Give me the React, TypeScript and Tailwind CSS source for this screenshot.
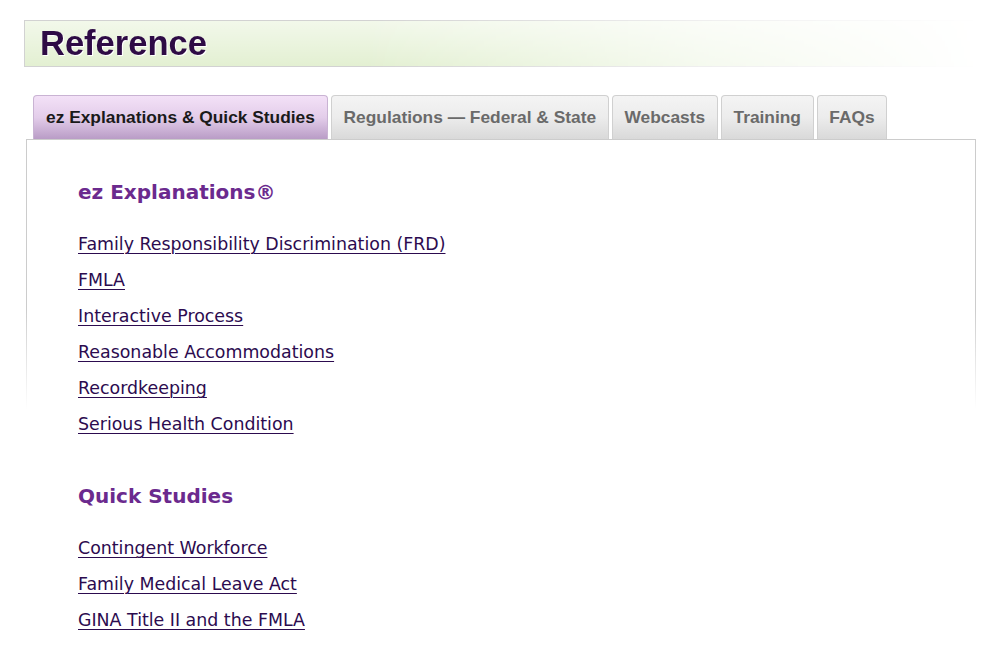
const tabs = [
  { label: 'ez Explanations & Quick Studies', active: true },
  { label: 'Regulations — Federal & State', active: false },
  { label: 'Webcasts', active: false },
  { label: 'Training', active: false },
  { label: 'FAQs', active: false },
];

const explanations = [
  'Family Responsibility Discrimination (FRD)',
  'FMLA',
  'Interactive Process',
  'Reasonable Accommodations',
  'Recordkeeping',
  'Serious Health Condition',
];

const studies = ['Contingent Workforce', 'Family Medical Leave Act', 'GINA Title II and the FMLA'];

const LinkList = ({ items }: { items: string[] }) => (
  <ul>
    {items.map((item) => (
      <li key={item} className="h-[36px] flex items-center">
        <a href="#" className="text-[#2c0b4f] underline underline-offset-[3px] decoration-1">
          {item}
        </a>
      </li>
    ))}
  </ul>
);

export default function App() {
  return (
    <div className="min-h-[657px] bg-white pt-[20px] font-['Liberation_Sans',Arial,sans-serif]">
      <div className="ml-[24px] h-[47px] flex items-center border-l border-y border-[#d2d2d2] pl-[15px] bg-[#e3f0d2] bg-[linear-gradient(to_bottom,rgba(255,255,255,0.55),rgba(255,255,255,0))] [mask-image:linear-gradient(to_right,black_35%,rgba(0,0,0,0.35)_70%,transparent_98%)]">
        <h1 className="text-[34.5px] font-bold text-[#2e0b45] leading-none [text-shadow:1px_1px_0_#fff]">Reference</h1>
      </div>

      <div className="ml-[26px] w-[950px] mt-[28px]">
        <div className="flex gap-[3px] pl-[7px]">
          {tabs.map((t) => (
            <div
              key={t.label}
              className={
                t.active
                  ? 'h-[44px] px-[12px] flex items-center rounded-t-[4px] border border-b-0 border-[#c9b3d3] bg-[linear-gradient(to_bottom,#f3e1f7,#e3cdea_50%,#b99cc6)] text-[17.35px] font-bold text-[#1a1a1a]'
                  : 'h-[44px] px-[11.7px] flex items-center rounded-t-[4px] border border-b-0 border-[#d0d0d0] bg-[linear-gradient(to_bottom,#f4f4f4,#ececec_50%,#d9d9d9)] text-[17.35px] font-bold text-[#6a6a6a]'
              }
            >
              {t.label}
            </div>
          ))}
        </div>

        <div className="px-px pt-px bg-[linear-gradient(to_bottom,#cccccc_0,#cccccc_170px,rgba(204,204,204,0)_270px)]">
          <div className="bg-white pl-[51px] pt-[37px] pb-[40px] font-['DejaVu_Sans',Verdana,sans-serif] text-[17.4px]">
            <h2 className="h-[30px] flex items-center text-[20px] font-bold text-[#6b2a8e] mb-[19px]">ez Explanations®</h2>
            <LinkList items={explanations} />
            <h2 className="h-[30px] flex items-center text-[20px] font-bold text-[#6b2a8e] mt-[39px] mb-[19px]">Quick Studies</h2>
            <LinkList items={studies} />
          </div>
        </div>
      </div>
    </div>
  );
}
